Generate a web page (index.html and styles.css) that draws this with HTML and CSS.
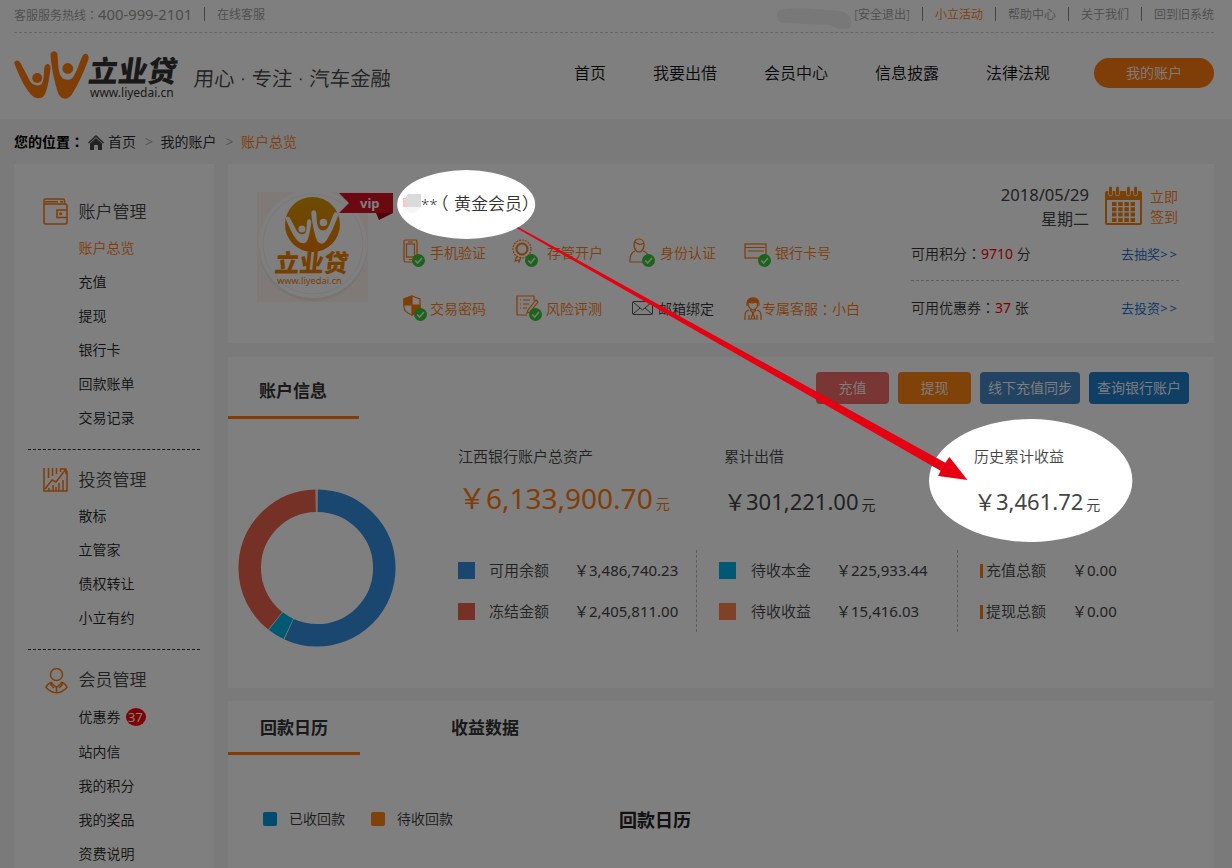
FILE: index.html
```html
<!DOCTYPE html>
<html lang="zh-CN">
<head>
<meta charset="utf-8">
<title>立业贷 - 账户总览</title>
<link rel="stylesheet" href="styles.css">
</head>
<body>
<svg class="defs" width="0" height="0" aria-hidden="true">
  <defs>
    <linearGradient id="gold" x1="0" y1="0" x2="0" y2="1"><stop offset="0" stop-color="#d89a00"/><stop offset="1" stop-color="#f07800"/></linearGradient>
    <symbol id="people" viewBox="0 0 74 48">
      <path d="M0 13C-1 9 4 8 6 12L15 29C17 34 24 36 27 33C30 29 29 22 30 16C31 12 36 12 36 17C35 27 33 38 30 44C27 49 20 48 16 43C9 35 4 23 0 13Z"/>
      <path d="M36 4C36-1 43-1 43 4C44 12 43 20 47 26C49 29 55 30 58 27C62 22 65 11 68 5C70 1 75 3 74 8C70 20 63 35 57 44C53 49 47 49 44 43C40 32 37 17 36 4Z"/>
      <circle cx="22.700" cy="27" r="5"/><circle cx="53.300" cy="17.500" r="5.400"/>
    </symbol>
    <symbol id="tick" viewBox="0 0 13 13"><circle cx="6.500" cy="6.500" r="6.500" fill="#38c636" stroke="none"/><path d="M3.200 6.500l2.500 2.600 4.200-5" fill="none" stroke="#e8f6e8" stroke-width="1.600"/></symbol>
  </defs>
</svg>

<header class="header">
  <div class="wrap topbar">
    <div class="links">
      <span class="hotline">客服服务热线<span class="colon" lang="zh-TW">：</span><span class="phone">400-999-2101</span></span><a>在线客服</a>
    </div>
    <div class="links">
      <svg class="smudge" width="80" height="26" viewBox="0 0 80 26"><path d="M4 4C14-1 40 2 66 4C75 5 80 13 76 21C70 24 60 21 56 18L8 16C3 13 2 8 4 4Z"/></svg>
      <a>[安全退出]</a><a class="orange">小立活动</a><a>帮助中心</a><a>关于我们</a><a>回到旧系统</a>
    </div>
  </div>
  <div class="wrap masthead">
    <svg class="logo-mark" width="75" height="48"><use href="#people"/></svg>
    <div class="logo-name"><strong>立业贷</strong><span>www.liyedai.cn</span></div>
    <div class="slogan">用心<i>·</i>专注<i>·</i>汽车金融</div>
    <nav class="nav"><a>首页</a><a>我要出借</a><a>会员中心</a><a>信息披露</a><a>法律法规</a></nav>
    <a class="account-btn">我的账户</a>
  </div>
</header>

<div class="wrap crumbs">
  <b>您的位置<span class="colon" lang="zh-TW">：</span></b>
  <svg width="16" height="16" viewBox="0 0 16 16"><path d="M0 8.500L8 1l8 7.500-1 1L8 3 1 9.500z"/><path d="M8 4l6 5.500V16h-4v-5H6v5H2V9.500z"/></svg>
  <a>首页</a><i>&gt;</i><a>我的账户</a><i>&gt;</i><a class="orange">账户总览</a>
</div>

<div class="wrap body">
  <aside class="sidebar">
    <section class="group">
      <h2><svg width="26" height="28" viewBox="0 0 26 28"><path d="M1 2.500V24.500Q1 26 2.500 26H22.500Q24 26 24 24.500V7.500Q24 6 22.500 6H1M1 2.500Q1 1 2.500 1H20Q21.500 1 21.500 2.500V6M2 3.700H15M17 3.700h3M24 12H14V19.500H24"/><circle cx="17.700" cy="15.700" r=".8"/></svg>账户管理</h2>
      <ul><li class="orange">账户总览</li><li>充值</li><li>提现</li><li>银行卡</li><li>回款账单</li><li>交易记录</li></ul>
    </section>
    <section class="group">
      <h2><svg width="26" height="26" viewBox="0 0 26 26"><path d="M1 1V24H24V4M2 22L9 13l4 2L23 2M17 2h6v5M5.500 1v10M9.500 1v8M13.500 1v6M17.500 1v4M6 21v3M10 18v6M13 20v4M16 16v8M20 13v11"/></svg>投资管理</h2>
      <ul><li>散标</li><li>立管家</li><li>债权转让</li><li>小立有约</li></ul>
    </section>
    <section class="group members">
      <h2><svg width="26" height="28" viewBox="0 0 26 28"><circle cx="13.500" cy="7.500" r="6"/><path d="M8 15.500Q4 17 3 20.500Q13.500 31 24 20.500Q23 17 19 15.500L13.500 20.500ZM9 15l-1 3 3 3M18 15l1 3-3 3M13.500 21v5"/></svg>会员管理</h2>
      <ul><li>优惠券<em>37</em></li><li>站内信</li><li>我的积分</li><li>我的奖品</li><li>资费说明</li></ul>
    </section>
  </aside>

  <main class="main">
    <section class="panel profile">
      <div class="avatar">
        <svg width="136" height="112" viewBox="0 0 136 112">
          <path d="M0 0h111v110H0z" fill="#fff4ef"/>
          <circle cx="56" cy="55" r="54" fill="#eee9e7"/><circle cx="56" cy="52" r="54" fill="#fff"/><circle cx="56" cy="52" r="50" fill="none" stroke="#f0f0f0"/>
          <circle cx="55.500" cy="32.500" r="27.500" fill="url(#gold)"/>
          <use href="#people" x="29" y="18" width="52" height="34" fill="#fff"/>
          <path d="M82 1h54v20H82l10-10z" fill="#d81020"/><path d="M119 21h17l-14 7z" fill="#a00a18"/>
        </svg>
        <span class="vip">vip</span>
        <div class="avatar-name"><strong>立业贷</strong><span>www.liyedai.cn</span></div>
      </div>
      <div class="who">
        <div class="username"><svg width="18" height="22" viewBox="0 0 18 22"><circle cx="9" cy="11" r="9" fill="#f5f5f5"/><path d="M0 5h5v9H0z" fill="#ffc4c6"/><path d="M5 1h13v13H3V4z" fill="#dadada"/></svg><span class="stars">**</span><span class="paren">（</span>黄金会员）</div>
        <div class="checks">
          <div class="check"><svg width="27" height="34" viewBox="0 0 27 34"><rect x="1" y="4" width="13" height="22" rx="1.500"/><rect x="3.500" y="8" width="8" height="13"/><path d="M5 6h5M6 23.500h3"/><use href="#tick" x="9" y="18" width="13" height="13"/></svg>手机验证</div>
          <div class="check"><svg width="35" height="34" viewBox="0 0 35 34"><circle cx="10" cy="13" r="9" stroke-dasharray="2 1"/><circle cx="10" cy="13" r="5.500" stroke-width="2"/><path d="M5 20l-2 5 3-1 1 2 2-5"/><use href="#tick" x="13" y="18" width="13" height="13"/></svg>存管开户</div>
          <div class="check"><svg width="31" height="34" viewBox="0 0 31 34"><path d="M6 15Q1 17 1 24v2h13M14 15q4 1 5 5M5 9Q5 3 10 3t5 6q0 4-3 6.500-2 1-4 0Q5 13 5 9M6 6q4 4 9 1"/><use href="#tick" x="13" y="18" width="13" height="13"/></svg>身份认证</div>
          <div class="check"><svg width="31" height="34" viewBox="0 0 31 34"><rect x="1" y="8" width="21" height="14"/><path d="M1 11.500h20M4 15h16"/><use href="#tick" x="14" y="18" width="13" height="13"/></svg>银行卡号</div>
          <div class="check"><svg width="27" height="34" viewBox="0 0 27 34"><path d="M9 4l8 3v8q0 5-8 8-8-3-8-8V7z"/><path d="M9 4v9H1V7zM9 13h8v2q0 5-8 8z" fill="currentColor"/><use href="#tick" x="11" y="16" width="13" height="13"/></svg>交易密码</div>
          <div class="check"><svg width="34" height="34" viewBox="0 0 34 34"><path d="M22 9V4H5v19h10M8 8h1m2 0h7M8 12h1m2 0h6M8 16h1m2 0h4M24 8L16 18l-1 3 3-1 8-10z"/><use href="#tick" x="17" y="16" width="13" height="13"/></svg>风险评测</div>
          <div class="check dark"><svg width="29" height="34" viewBox="0 0 29 34"><rect x="3.500" y="9.500" width="20" height="13" rx="1"/><path d="M4 10l9.500 8 9.500-8M4 22l7-6M23 22l-7-6"/></svg>邮箱绑定</div>
          <div class="check"><svg width="18" height="34" viewBox="0 0 18 34"><path d="M3 14Q2 6 9 6t6 8M4 10q6 2 9-1 2 8-4 9-5-1-5-8M5 18Q1 19 1 24v4M13 18q4 1 4 6v4M6 18l3 3 3-3M9 21l-2 6h4zM5 23v5M13 23v5"/><path d="M4 10Q4 6 9 6t5 5q-5-3-10-1" fill="currentColor"/></svg>专属客服<span class="colon" lang="zh-TW">：</span>小白</div>
        </div>
      </div>
      <div class="perks">
        <div class="signin">
          <p class="date"><span>2018/05/29</span><br>星期二</p>
          <svg width="37" height="39" viewBox="0 0 37 39"><path d="M2 5h33q2 0 2 2v30q0 2-2 2H2q-2 0-2-2V7q0-2 2-2zM2 14v23h33V14z" fill-rule="evenodd"/><path class="dots" d="M7 18h23M7 23.300h23M7 28.600h23M7 33.900h23"/><path class="pins" d="M5.500 3v5M12.500 3v5M23.500 3v5M30.500 3v5"/><path class="rings" d="M5.500 2v6M12.500 2v6M23.500 2v6M30.500 2v6"/></svg>
          <a class="orange">立即<br>签到</a>
        </div>
        <div class="perk"><span>可用积分<span class="colon" lang="zh-TW">：</span><b>9710</b> 分</span><a>去抽奖<span>&gt;&gt;</span></a></div>
        <div class="perk"><span>可用优惠券<span class="colon" lang="zh-TW">：</span><b>37</b> 张</span><a>去投资<span>&gt;&gt;</span></a></div>
      </div>
    </section>

    <section class="panel account">
      <div class="panel-head">
        <h3 class="tab active">账户信息</h3>
        <div class="actions"><a class="red">充值</a><a class="amber">提现</a><a class="steel">线下充值同步</a><a class="blue">查询银行账户</a></div>
      </div>
      <div class="account-body">
        <svg class="donut" width="160" height="160" viewBox="-80 -80 160 160">
          <g transform="rotate(-90)">
          <circle r="67.300" stroke="#358fdf" pathLength="360" stroke-dasharray="204 156" stroke-dashoffset="-.6"/>
          <circle r="67.300" stroke="#00b2e4" pathLength="360" stroke-dasharray="12.600 347.400" stroke-dashoffset="-205.200"/>
          <circle r="67.300" stroke="#ec624d" pathLength="360" stroke-dasharray="140.400 219.600" stroke-dashoffset="-218.400"/>
          <circle class="rest" r="67.300" pathLength="360" stroke-dasharray=".8 359.200" stroke-dashoffset="-359.300"/>
          </g>
        </svg>
        <div class="figures">
          <div class="stat big"><h4>江西银行账户总资产</h4><p>￥6,133,900.70<small>元</small></p></div>
          <div class="stat"><h4>累计出借</h4><p>￥301,221.00<small>元</small></p></div>
          <div class="stat"><h4>历史累计收益</h4><p>￥3,461.72<small>元</small></p></div>
          <div class="ledger first"><i class="sw c1"></i><span>可用余额</span><b>￥3,486,740.23</b><i class="sw c2"></i><span>冻结金额</span><b>￥2,405,811.00</b></div>
          <div class="ledger"><i class="sw c3"></i><span>待收本金</span><b>￥225,933.44</b><i class="sw c4"></i><span>待收收益</span><b>￥15,416.03</b></div>
          <div class="ledger last"><i class="bar"></i><span>充值总额</span><b>￥0.00</b><i class="bar"></i><span>提现总额</span><b>￥0.00</b></div>
        </div>
      </div>
    </section>

    <section class="panel calendar">
      <div class="panel-head"><h3 class="tab active">回款日历</h3><h3 class="tab">收益数据</h3></div>
      <div class="cal-bar"><span><i class="dot c5"></i>已收回款</span><span><i class="dot c6"></i>待收回款</span><h3>回款日历</h3></div>
    </section>
  </main>
</div>

<svg class="spotlight" width="1232" height="868" viewBox="0 0 1232 868" aria-hidden="true">
  <path fill="#000" fill-opacity=".5" fill-rule="evenodd" d="M0 0H1232V868H0ZM397.200 204.500a69 34.500 0 1 0 138 0a69 34.500 0 1 0-138 0ZM929 480.500a101.700 61.500 0 1 0 203.400 0a101.700 61.500 0 1 0-203.400 0Z"/>
  <path fill="#e60012" d="M516.500 228L519 227.500L945.300 462.700L949.400 457L967.400 480L938.200 476L940.600 470.700Z"/>
</svg>
</body>
</html>
```

FILE: styles.css
```css
* { box-sizing: border-box; margin: 0; padding: 0; }
body {
  width: 1232px;
  height: 868px;
  overflow: hidden;
  background: #f4f4f4;
  color: #333;
  font: 350 14px/20px "Noto Sans", "Noto Sans CJK SC", sans-serif;
  text-spacing-trim: space-all;
}
i, em { font-style: normal; }
ul { list-style: none; }
svg { display: block; flex: none; }
.defs { position: absolute; }
.wrap { margin-left: 14px; width: 1200px; }
.orange, .topbar .orange { color: #ff7a10; }
.colon { font-family: "Noto Sans CJK TC", sans-serif; line-height: 1; }
.phone, .date, .perk b, .stat p, .ledger b, .members em { font-weight: 400; }

/* header */
.header { height: 119px; background: #fff; }
.topbar {
  display: flex;
  justify-content: space-between;
  height: 33px;
  padding-top: 7px;
  border-bottom: 1px dashed #ccc;
  font-size: 12px;
  line-height: 16px;
  color: #999;
  white-space: nowrap;
}
.links { display: flex; height: 14px; }
.links > * + a { padding-left: 12px; margin-left: 12px; border-left: 1px solid #888; }
.links .smudge + a { border: 0; margin: 0; padding: 0; }
.hotline { width: 178px; line-height: 14px; }
.phone { font-size: 14.8px; }
.smudge { fill: #f3f1f1; margin: 0; }
.masthead { display: flex; height: 86px; }
.logo-mark { margin-top: 18px; fill: #ff7a10; }
.logo-name { width: 105px; padding-top: 23px; }
.logo-name strong {
  display: block;
  height: 31px;
  font-size: 29.400px;
  line-height: 31px;
  font-weight: 900;
  transform: skewX(-8deg);
}
.logo-name span { display: block; margin-left: 1px; font-size: 12px; line-height: 12px; font-weight: 400; }
.slogan { display: flex; width: 380px; padding-top: 33px; font-size: 20.400px; line-height: 24px; font-weight: 350; color: #444; transform: skewX(-4deg); }
.slogan i { width: 17px; text-align: center; }
.nav { display: flex; gap: 47px; width: 520px; padding-top: 30px; font-size: 16px; line-height: 20px; color: #111; white-space: nowrap; }
.account-btn { margin-top: 25px; width: 120px; height: 30px; border-radius: 15px; background: #ff7a10; color: #fff; line-height: 30px; text-align: center; }

.crumbs { display: flex; align-items: center; height: 45px; color: #222; }
.crumbs b { width: 74px; color: #000; }
.crumbs svg { margin-right: 4px; fill: #444; }
.crumbs i { width: 24.500px; padding-left: 9px; color: #999; }

/* layout */
.body { display: flex; gap: 14px; height: 704px; }
.sidebar { width: 200px; padding: 18px 14px 0; background: #fff; }
.main { display: flex; flex-direction: column; gap: 14px; width: 986px; }
.panel { background: #fff; flex: none; }

.group { padding: 11px 0 14px; border-bottom: 1px dashed #333; }
.group h2 { display: flex; align-items: center; gap: 10px; height: 38px; padding-left: 14.500px; font-size: 17px; line-height: 24px; font-weight: 350; color: #444; }
.group h2 svg { width: 26px; fill: none; stroke: #ff7a10; stroke-width: 1.500px; }
.group li { height: 34px; padding-left: 50.500px; line-height: 34px; color: #222; }
.group li.orange { color: #ff7a10; }
.members { border: 0; }
.members h2 svg { margin-top: 2px; }
.members li:first-child { display: flex; align-items: center; height: 36px; gap: 5px; }
.members em { width: 20px; height: 18px; border-radius: 50%; background: #f00; color: #fff; font-size: 13px; line-height: 18px; text-align: center; }

/* profile */
.profile { display: flex; height: 179px; padding-left: 29px; }
.avatar { position: relative; width: 146px; padding-top: 28px; }
.vip { position: absolute; left: 103px; top: 29px; color: #fff; font-size: 13px; font-weight: 700; line-height: 20px; }
.avatar-name { position: absolute; left: 18px; top: 86px; color: #f08000; }
.avatar-name strong { display: block; font-size: 24.500px; line-height: 26px; font-weight: 900; transform: skewX(-6deg); }
.avatar-name span { display: block; margin: -2px 0 0 2px; font-size: 9.300px; line-height: 13px; font-weight: 400; }
.who { width: 508px; }
.username { display: flex; height: 80px; align-items: center; font-size: 17px; line-height: 24px; color: #333; }
.stars { width: 17px; font-size: 15px; }
.paren { width: 8.500px; margin: 0 5.500px 0 2px; font-feature-settings: "halt"; }
.checks { display: grid; grid-template-columns: 112px 114px 116px auto; grid-template-rows: 56px 56px; height: 112px; margin-top: -19px; }
.check { display: flex; align-items: center; color: #ff7a10; white-space: nowrap; }
.check svg { fill: none; stroke: currentColor; stroke-width: 1.200px; }
.check.dark { color: #333; }
.check.dark svg { stroke: #555; stroke-width: 1px; }
.check:nth-child(4n+2) { margin-left: -3px; }
.check:nth-child(4n+4) { margin-left: -1px; }
.perks { width: 268px; padding-top: 19px; }
.signin { display: flex; height: 44px; padding-left: 60px; }
.date { width: 118px; text-align: right; font-size: 16px; line-height: 24px; color: #444; }
.date span { font-size: 16.600px; }
.signin svg { margin: 3px 8px 0 16px; fill: #f5820e; }
.dots { stroke: #f5820e; stroke-width: 4px; stroke-dasharray: 4.500 1.700; }
.pins { stroke: #fff; stroke-width: 4.500px; stroke-linecap: round; }
.rings { stroke: #f5820e; stroke-width: 3px; stroke-linecap: round; }
.signin a { padding-top: 4px; }
.perk { display: flex; justify-content: space-between; height: 54px; line-height: 54px; white-space: nowrap; }
.perk b { color: #f00; }
.perk a { color: #1169c7; font-size: 13px; }
.perk a span { letter-spacing: 2px; font-weight: 400; }
.perk:nth-child(2) { border-bottom: 1px dashed #bbb; }

/* account */
.account { height: 331px; }
.panel-head { display: flex; height: 62px; }
.tab { width: 192px; height: 62px; padding-left: 31px; font-size: 17px; line-height: 67px; }
.tab.active { width: 131px; border-bottom: 3px solid #ff7a10; }
.actions { display: flex; gap: 9px; margin: 15px 25px 0 auto; }
.actions a { width: 100px; height: 32px; border-radius: 4px; color: #fff; line-height: 32px; text-align: center; }
.actions .red { width: 73px; background: #f36c68; }
.actions .amber { width: 73px; background: #ff8410; }
.actions .steel { background: #4687c7; }
.actions .blue { background: #217cca; }
.account-body { display: flex; }
.donut { margin: 69px 60px 0 9px; fill: none; stroke-width: 22.500px; }
.donut .rest { stroke: #f6d9cf; }
.figures { display: grid; grid-template-columns: 240px 261px 240px; grid-template-rows: 131px 82px; }
.stat { padding: 27px 0 0 27px; }
.stat:nth-child(3) { padding-left: 16px; }
.stat.big { padding-left: 1px; }
.stat h4 { font-size: 15px; line-height: 20px; font-weight: 350; color: #444; }
.stat p { margin-top: 17px; font-size: 22px; line-height: 36px; color: #444; white-space: nowrap; }
.stat.big p { margin-top: 14px; font-size: 28px; color: #ff7a10; }
.stat small { margin-left: 3px; font-size: 14px; }
.ledger { display: grid; grid-template-columns: 32px 85px auto; grid-template-rows: 41px 41px; align-items: center; font-size: 15px; color: #444; border-right: 1px dashed #bbb; white-space: nowrap; }
.ledger span, .ledger b { padding-bottom: 2px; }
.ledger + .ledger { padding-left: 22px; }
.ledger.last { border: 0; grid-template-columns: 6px 86px auto; }
.sw { width: 17px; height: 17px; margin-left: 1px; }
.ledger + .ledger .sw { margin-left: 0; }
.bar { width: 3px; height: 14px; background: #ff7a10; }
.c1 { background: #358fdf; }
.c2 { background: #ec624d; }
.c3 { background: #00b2e4; }
.c4 { background: #ff844c; }
.c5 { background: #0099dc; }
.c6 { background: #ff8410; }

/* repayment calendar */
.calendar { height: 167px; margin-top: -1px; }
.calendar .panel-head { height: 54px; }
.calendar .tab { height: 54px; line-height: 53px; padding-left: 32px; }
.calendar .tab.active { width: 132px; }
.calendar .tab + .tab { margin-left: 59px; }
.cal-bar { display: flex; align-items: center; height: 20px; margin: 54px 0 0 35px; }
.cal-bar span { display: flex; align-items: center; width: 108px; }
.dot { width: 14px; height: 14px; margin-right: 12px; border-radius: 2px; }
.cal-bar h3 { margin: 2px 0 0 140px; font-size: 18px; color: #222; }

/* dimming layer with two highlighted areas */
.spotlight { position: absolute; left: 0; top: 0; }
```
